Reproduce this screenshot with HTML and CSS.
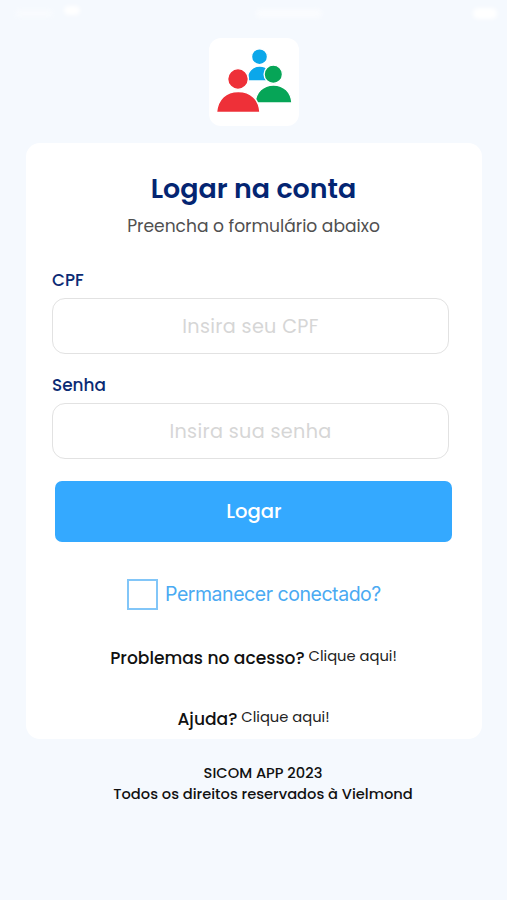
FILE: index.html
```html
<!DOCTYPE html>
<html lang="pt-BR">
<head>
<meta charset="utf-8">
<meta name="viewport" content="width=device-width, initial-scale=1">
<title>SICOM APP</title>
<link rel="stylesheet" href="styles.css">
</head>
<body>
<main class="screen">
  <div class="status" aria-hidden="true"><span class="network"><i class="signal"></i><i class="wifi"></i></span><i class="clock"></i><i class="battery"></i></div>
  <div class="logo">
    <svg width="90" height="88" viewBox="0 0 90 88" aria-hidden="true">
      <g stroke="#fff" stroke-width="1.4">
        <circle cx="50.500" cy="18.700" r="8" fill="#0ba7ea"/>
        <path d="M38 43C38 34 43 28 50.800 28S64 34 64 43Z" fill="#0ba7ea"/>
        <path d="M46 65C47 54 54 47 64.500 47S82 54 83 65Z" fill="#06a557"/>
        <circle cx="64.300" cy="36.300" r="9.200" fill="#06a557"/>
        <path d="M7.500 74.500C8.500 61 17 53.500 29.300 53.500S50 61 51 74.500Z" fill="#ee3038"/>
        <circle cx="29" cy="41" r="10.400" fill="#ee3038"/>
      </g>
    </svg>
  </div>
  <form class="card">
    <h1 class="title">Logar na conta</h1>
    <p class="subtitle">Preencha o formulário abaixo</p>
    <label class="label" for="cpf">CPF</label>
    <input class="field" id="cpf" type="text" placeholder="Insira seu CPF">
    <label class="label" for="senha">Senha</label>
    <input class="field" id="senha" type="password" placeholder="Insira sua senha">
    <button class="submit" type="button">Logar</button>
    <label class="remember"><input class="check" type="checkbox"><span>Permanecer conectado?</span></label>
    <p class="help"><span class="question">Problemas no acesso?</span><a class="link">Clique aqui!</a></p>
    <p class="help"><span class="question">Ajuda?</span><a class="link">Clique aqui!</a></p>
  </form>
  <footer class="footer">
    <p>SICOM APP 2023</p>
    <p>Todos os direitos reservados à Vielmond</p>
  </footer>
</main>
</body>
</html>
```
FILE: styles.css
```css
* { box-sizing: border-box; }
body { margin: 0; background: #f5f9fe; font-family: Poppins, Inter, "Open Sans", sans-serif; color: #111; }
h1, p { margin: 0; }
.screen { height: 900px; overflow: hidden; }
.status { display: flex; justify-content: space-between; align-items: center; height: 38px; padding: 0 10px 12px 16px; }
.status i { background: #fff; border-radius: 5px; filter: blur(2px); }
.network { display: flex; align-items: center; gap: 12px; }
.signal { width: 36px; height: 7px; opacity: .4; }
.wifi { width: 16px; height: 9px; margin-bottom: 6px; }
.clock { width: 66px; height: 9px; opacity: .5; margin-right: -24px; }
.battery { width: 24px; height: 11px; }
.logo { width: 90px; height: 88px; margin: 0 auto; border-radius: 12px; background: #fff; overflow: hidden; }
.logo svg { display: block; }
.card { width: 456px; height: 596px; margin: 17px 0 0 26px; padding: 26px 27px 0 26px; background: #fff; border-radius: 14px; display: flex; flex-direction: column; }
.title { font-size: 26.900px; line-height: 40px; font-weight: 600; color: #042572; text-align: center; }
.subtitle { margin-top: 4px; font-size: 17.100px; line-height: 26px; color: #505050; text-align: center; }
.label { margin-top: 28px; font-size: 16.900px; line-height: 26px; font-weight: 500; color: #0b2b74; }
.field { width: 397px; height: 56px; margin: 5px 0 0; padding: 0; border: 1.5px solid #e2e2e2; border-radius: 13px; background: #fff; font: inherit; font-size: 19.200px; letter-spacing: .33px; text-align: center; outline: none; }
.field::placeholder { color: #d6d6d6; opacity: 1; }
.field + .label { margin-top: 18px; }
.submit { width: 397px; height: 61px; margin: 22px 0 0 3.4px; padding: 0 0 2px; border: 0; border-radius: 7px; background: #34a9ff; color: #fff; font: inherit; font-size: 19.600px; font-weight: 500; }
.remember { display: flex; align-items: center; gap: 7px; height: 31px; margin: 37px 0 0 75px; color: #4aaaf2; font: 19.500px/31px Inter, sans-serif; letter-spacing: -.46px; white-space: nowrap; }
.check { appearance: none; flex: none; width: 31px; height: 31px; margin: 0; border: 2px solid #82c6f8; }
.help { display: flex; justify-content: center; gap: 4px; height: 26px; margin-top: 35px; line-height: 26px; }
.question { font-size: 17.100px; font-weight: 500; }
.link { font-size: 14.700px; line-height: 23px; color: #222; }
.footer { padding: 24px 0 0 19px; text-align: center; font-size: 14.660px; line-height: 21px; font-weight: 500; }
```
